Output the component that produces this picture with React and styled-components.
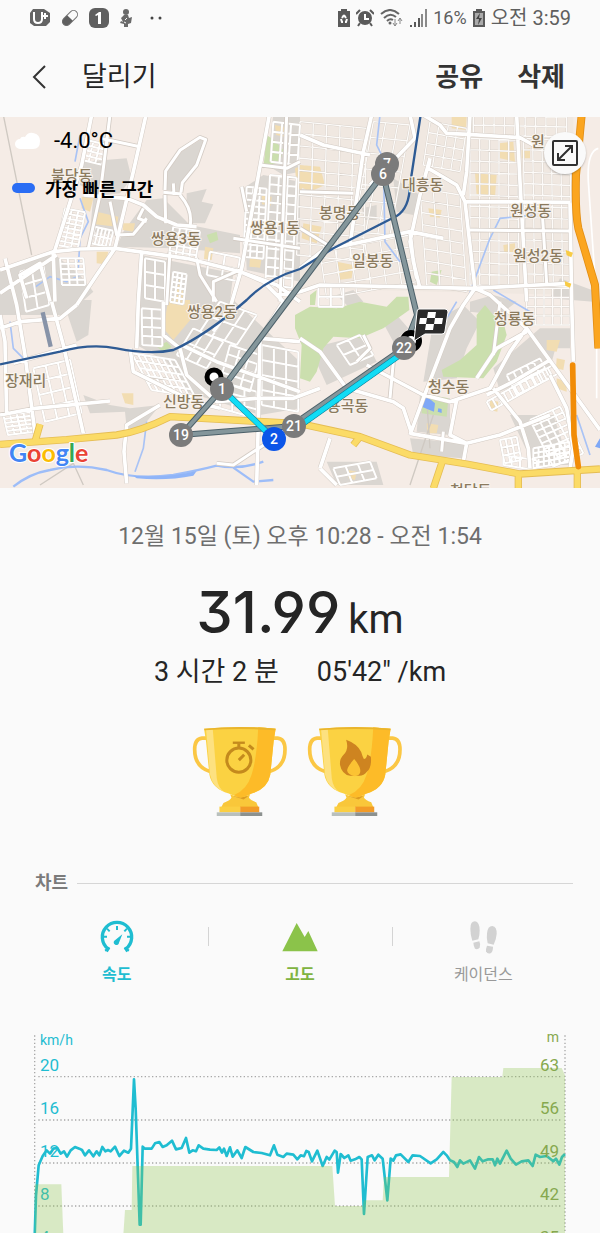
import React, { useState } from 'react'
import styled, { createGlobalStyle } from 'styled-components'


const GlobalStyle = createGlobalStyle`
  * { box-sizing: border-box; }
  body {
    margin: 0;
    background-color: #fafafa;
    color: #252525;
    font-family: Roboto, "Noto Sans CJK KR", sans-serif;
  }
  button {
    margin: 0;
    padding: 0;
    border: 0;
    background: none;
    color: inherit;
    font-family: inherit;
    cursor: pointer;
  }
`

const Page = styled.div`
  display: flex;
  flex-direction: column;
  overflow: hidden;
`

const StatusBar = styled.div`
  display: flex;
  align-items: center;
  justify-content: space-between;
  height: 36px;
  padding: 0 29px;
  color: #5f5f5f;
`

const StatusGroup = styled.div`
  display: flex;
  align-items: center;
  gap: ${(props) => props.$gap}px;
`

const StatusText = styled.span`
  font-size: ${(props) => props.$size}px;
  line-height: 24px;
  white-space: nowrap;
`

const Header = styled.header`
  display: flex;
  align-items: center;
  height: 81px;
  padding: 0 35px 0 28px;
`

const BackButton = styled.button`
  display: flex;
  width: 24px;
  height: 28px;
  margin-right: 30px;
`

const Title = styled.h1`
  flex: 1;
  margin: 0;
  font-size: 27px;
  font-weight: 400;
  line-height: 36px;
`

const Actions = styled.div`
  display: flex;
  gap: 34px;
`

const ActionButton = styled.button`
  color: #333;
  font-size: 26px;
  font-weight: 700;
  line-height: 36px;
`

const MapArea = styled.section`
  position: relative;
  overflow: hidden;
`

const Drawing = styled.svg`
  display: block;
  width: 100%;
  height: auto;
`

const MapLabel = styled.text`
  font-size: 15px;
  font-weight: 500;
  fill: #8b7b5f;
  stroke: #f9f4ee;
  stroke-width: 2px;
  paint-order: stroke;
`

const MarkerText = styled.text`
  font-size: 14px;
  font-weight: 500;
  fill: #fff;
  text-anchor: middle;
`

const GoogleText = styled.text`
  font-family: Lato, sans-serif;
  font-size: 25px;
  font-weight: 700;
  stroke: #fff;
  stroke-width: 2px;
  paint-order: stroke;
`

const Legend = styled.div`
  position: absolute;
  top: 0;
  left: 12px;
  display: grid;
  grid-template-columns: 33px auto;
  grid-template-rows: 47px 47px;
  align-items: center;
  color: #000;
`

const Temperature = styled.span`
  padding-left: 9px;
  font-size: 22px;
`

const FastestLabel = styled.span`
  font-size: 18px;
  font-weight: 700;
`

const FastestMark = styled.span`
  width: 23px;
  height: 10px;
  border-radius: 5px;
  background-color: #2a6df4;
`

const ExpandButton = styled.button`
  position: absolute;
  top: 15px;
  right: 14px;
  display: flex;
  align-items: center;
  justify-content: center;
  width: 42px;
  height: 42px;
  border-radius: 50%;
  background-color: #fafafa;
  box-shadow: 0 1px 2px rgba(0, 0, 0, 0.25);
`

const Summary = styled.section`
  display: flex;
  flex-direction: column;
  align-items: center;
  padding-top: 31px;
`

const DateLine = styled.p`
  margin: 0;
  color: #6e6e6e;
  font-size: 23px;
  line-height: 36px;
`

const Distance = styled.p`
  display: flex;
  align-items: baseline;
  gap: 8px;
  margin: 25px 0 0;
  line-height: 64px;
`

const DistanceValue = styled.span`
  font-family: Inter, Roboto, sans-serif;
  font-size: 58px;
  font-weight: 500;
  font-feature-settings: "ss01", "cv09";
`

const DistanceUnit = styled.span`
  font-size: 40px;
`

const Stats = styled.p`
  display: flex;
  gap: 38px;
  margin: 0;
  font-size: 27px;
  line-height: 40px;
`

const Trophies = styled.div`
  display: flex;
  gap: 20px;
  margin: 34px 6px 0 0;
`

const ChartTitle = styled.h2`
  display: flex;
  align-items: center;
  gap: 9px;
  margin: 53px 27px 0 35px;
  color: #7b7b7b;
  font-size: 18px;
  font-weight: 700;
  line-height: 26px;

  &::after {
    content: "";
    flex: 1;
    height: 1px;
    background-color: #d6d6d6;
  }
`

const Tabs = styled.div`
  display: grid;
  grid-template-columns: repeat(3, 1fr);
  padding: 24px 25px 0;
`

const Tab = styled.button`
  position: relative;
  display: flex;
  flex-direction: column;
  align-items: center;
  gap: 7px;
  color: ${(props) => props.$color};
  font-size: 16px;
  font-weight: ${(props) => (props.$on ? 700 : 400)};
  line-height: 24px;

  &:not(:first-child)::before {
    content: "";
    position: absolute;
    top: 7px;
    left: 0;
    width: 1px;
    height: 19px;
    background-color: #d4d4d4;
  }
`

const ChartBox = styled.section`
  margin-top: 35px;
`

const AxisText = styled.text`
  font-size: ${(props) => (props.$unit ? 14 : 17)}px;
  fill: ${(props) => props.$color};
  text-anchor: ${(props) => props.$anchor || 'start'};
`


const CYAN = '#1fbdd1'
const GREEN = '#86a84e'

// slanted block of small streets: corner, along vector, down vector, counts
const block = (x, y, ax, ay, bx, by, cols, rows) => {
  let d = ''
  for (let i = 0; i <= cols; i++) {
    const t = i / cols
    d += `M${x + ax * t} ${y + ay * t}l${bx} ${by}`
  }
  for (let i = 0; i <= rows; i++) {
    const t = i / rows
    d += `M${x + bx * t} ${y + by * t}l${ax} ${ay}`
  }
  return d
}

// map drawing units are a third of a pixel
const greyAreas = [
  'M500 225L500 170L545 110L605 72L612 82L585 150L545 200L538 230Z',
  'M250 140L380 130L395 190L360 235L300 240L240 210Z',
  'M280 245L380 255L350 360L270 350Z',
  'M440 255L490 250L570 330L720 360L720 415L520 400L350 395L370 350Z',
  'M560 235L620 222L605 260L640 268L615 325L575 325L560 270Z',
  'M730 220L790 180L900 200L900 500L740 465Z',
  'M820 0L900 0L900 170L850 180L800 150Z',
  'M0 460L160 415L240 480L280 530L200 600L0 600Z',
  'M425 420L700 475L690 560L420 560Z',
  'M0 555L275 555L265 660L230 680L190 560Z',
  'M415 555L700 555L900 740L900 880L780 900L560 830L500 740L410 690Z',
  'M250 840L330 870L390 880L480 870L420 945L380 940L375 890L270 895Z',
  'M1180 190L1260 240L1240 300L1190 290Z', 'M1085 280L1130 270L1130 315L1095 315Z',
  'M1390 570L1440 620L1400 700L1370 790L1270 800L1300 620Z',
  'M1410 560L1480 540L1550 560L1500 600L1410 590Z',
  'M1230 970L1395 985L1390 1030L1240 1020Z', 'M1260 840L1350 850L1350 960L1250 950Z',
  'M1480 760L1620 640L1680 650L1650 760L1500 830Z', 'M1530 900L1660 900L1710 1050L1600 1050Z',
  'M930 700L1090 660L1130 740L980 810Z', 'M980 1040L1130 1040L1150 1110L1010 1110Z',
  'M1620 640L1710 640L1710 700L1650 700Z', 'M1680 490L1790 530L1780 560L1650 550Z',
  'M1010 540L1060 525L1090 560L1050 580Z', 'M1150 625L1190 600L1225 640L1180 680Z',
]
const sandAreas = [
  'M245 245L280 250L270 290L245 280Z', 'M290 290L355 305L350 335L285 328Z', 'M370 325L405 325L400 350L368 345Z',
  'M290 410L325 410L315 448L290 445Z', 'M615 395L640 400L635 435L612 432Z', 'M750 425L785 430L780 458L748 455Z',
  'M825 30L862 38L855 65L828 60Z', 'M785 240L815 245L812 272L786 268Z', 'M540 490L555 560L515 560Z',
  'M505 555L570 555L575 610L520 675L490 640Z', 'M365 835L400 835L400 870L375 865Z', 'M885 160L910 150L905 230L890 210Z',
  'M900 150L960 155L975 210L930 230L900 215Z', 'M1425 175L1490 180L1485 245L1430 240Z',
  'M1498 85L1540 80L1545 140L1500 130Z', 'M1355 5L1400 5L1398 45L1355 40Z', 'M1285 280L1325 285L1320 308L1290 305Z',
  'M910 325L965 335L950 385L905 370Z', 'M1010 440L1060 450L1055 490L1015 495Z', 'M1510 390L1545 385L1545 415L1512 410Z',
  'M1640 675L1680 675L1670 710L1640 705Z', 'M1670 730L1695 735L1690 765L1668 760Z', 'M1470 855L1495 860L1492 890L1470 885Z',
  'M1280 925L1315 930L1310 955L1282 955Z', 'M1565 105L1590 100L1590 130L1565 130Z', 'M1045 1065L1070 1070L1065 1095L1045 1090Z',
  'M1670 790L1700 800L1700 830L1670 820Z',
]
const greenAreas = [
  'M800 60L822 75L850 105L840 140L790 160Z', 'M620 360L650 350L655 375L630 385Z', 'M470 695L500 680L515 695L490 710Z',
  'M885 600L930 575L1010 580L1080 560L1160 575L1190 545L1225 545L1228 585L1150 640L1080 670L1000 665L970 700L950 770L930 800L900 790L905 690L885 640Z',
  'M1430 600L1455 570L1480 600L1510 620L1520 660L1490 740L1450 790L1330 785L1325 765L1380 735L1430 690Z',
  'M1265 835L1345 850L1340 905L1265 895Z', 'M1295 470L1325 465L1310 510L1290 500Z', 'M930 540L950 525L945 570L930 570Z',
]
const mainRoads = [
  'M275 0L245 150L195 310L160 420L165 560', 'M438 0L400 170L345 400L290 480L230 570',
  'M0 465L160 410L240 402L345 400L560 430L720 470L830 510L900 560', 'M808 0L770 210L725 460L690 580L640 650',
  'M250 240L380 250L430 270L470 305L530 330L590 335', 'M15 430L50 570L75 720L105 955', 'M0 535L170 420',
  'M155 560L190 690L250 955', 'M0 900L105 880L330 858', 'M0 600L15 680L20 900', 'M80 550L60 480L120 445L135 500L150 560',
  'M230 570L180 610L60 620L0 640', 'M230 690L40 745',
  'M720 470L790 500L850 560L780 670L900 680', 'M780 670L775 920L770 1110', 'M545 690L650 740L900 830',
  'M540 700L490 660L490 560', 'M540 700L560 780L650 860L770 850', 'M410 700L415 560L425 410', 'M390 700L400 770L580 860L660 880',
  'M480 870L380 930L372 1010L380 1105', 'M1115 0L1090 110L1050 390', 'M1230 0L1245 70L1110 210',
  'M1270 0L1320 30L1340 55L1405 58L1560 68L1600 90', 'M1410 0L1400 170L1390 240', 'M1290 130L1285 160L1370 210L1395 260L1425 520',
  'M1290 130L1260 240L1230 380L1250 490',
  'M1425 520L1390 570L1350 640L1270 850L1230 960',
  'M1395 260L1710 262', 'M1550 0L1560 200L1580 560', 'M1710 262L1715 560L1720 740', 'M900 460L970 405L1230 350L1330 370',
  'M830 540L900 530L960 510L1420 520L1710 505', 'M1425 520L1470 540L1580 640L1800 945', 'M1230 350L1240 440L1260 520',
  'M1580 640L1530 710L1470 820L1350 860L1270 840L1100 750', 'M1370 855L1350 960L1400 985L1500 960L1650 900',
  'M1230 955L1400 985L1390 1040', 'M900 670L960 710L1040 820L1180 860L1210 880L1235 955', 'M770 850L880 850L960 820',
  'M1480 820L1560 920L1585 1000L1590 1060', 'M1650 735L1540 800L1460 840', 'M1580 650L1490 700L1430 790',
  'M1650 780L1700 880L1720 1000L1710 1060', 'M960 1060L990 970', 'M960 1060L1010 1110', 'M900 60L970 90L1110 120',
]
const smallRoads = [
  'M330 0L300 240L265 400', 'M300 70L420 95', 'M490 232L545 237', 'M520 205L522 240', 'M495 240L497 325', 'M540 240Q580 285 570 335',
  'M495 225L497 168L540 106L600 67L617 74L590 150L547 203L543 232', 'M510 410L500 570', 'M590 430L600 480L650 560', 'M430 280L415 310L440 320',
  'M330 260L350 360L400 358L440 310', 'M720 465L640 500L640 560', 'M700 370L900 400', 'M780 150L860 160L900 140', 'M725 215L740 290', 'M860 0L840 560',
  'M650 1045L700 1050L760 1010L800 985', 'M1090 660L1110 700L1070 740', 'M1180 740L1170 850', 'M1330 950L1325 1010',
  'M1410 345L1710 348', 'M900 230L1060 235', 'M1625 262L1640 505', 'M900 340L1000 400', 'M1500 560L1480 720',
]
const lanes = [
  block(260, 75, 60, 14, -14, 60, 3, 4), block(195, 280, 60, 12, -22, 110, 3, 8), block(285, 335, 55, 12, -12, 50, 5, 2),
  block(520, 335, 80, 14, -14, 90, 4, 5), block(740, 215, 60, 6, -10, 210, 3, 11), block(810, 180, 80, 8, -14, 330, 3, 12),
  block(180, 430, 70, 0, 6, 80, 3, 5), block(60, 470, 70, -20, 18, 120, 2, 3), block(520, 470, 40, 8, -10, 90, 3, 6),
  block(630, 410, 90, 18, -10, 70, 2, 2), block(435, 430, 60, 10, 0, 120, 2, 3), block(820, 20, 80, 10, -8, 120, 3, 4),
  block(100, 760, 110, -26, 35, 160, 3, 4), block(10, 900, 80, -10, 14, 60, 4, 5), block(395, 715, 130, 20, 60, 110, 7, 5),
  block(425, 580, 60, 4, 2, 110, 2, 4), block(580, 640, 90, 40, -50, 80, 3, 2), block(660, 560, 110, 40, -60, 90, 3, 2),
  block(690, 690, 90, 30, -30, 110, 3, 4), block(785, 690, 110, 20, 0, 180, 3, 4), block(660, 800, 110, 30, 0, 80, 3, 3),
]
const fineStreets = [
  block(900, 20, 200, 20, -10, 400, 5, 11), block(1120, 20, 110, 10, -60, 330, 3, 7), block(1410, 70, 145, 6, 0, 440, 5, 13),
  block(1570, 70, 140, 6, 6, 440, 5, 13), block(1260, 220, 120, 20, 20, 290, 3, 8), block(1290, 20, 110, 20, -20, 130, 4, 4),
  block(960, 410, 270, -50, 20, 140, 6, 4), block(1580, 520, 130, 0, 0, 110, 5, 4), block(1420, 0, 280, 6, 0, 60, 9, 2),
]
const denseLanes = [
  block(1460, 860, 200, -110, 14, 26, 12, 1), block(1590, 915, 90, -40, 70, 140, 4, 8), block(1500, 975, 50, -10, 14, 70, 3, 3),
  block(1600, 1000, 110, -20, 0, 60, 7, 4), block(1520, 780, 100, -50, 30, 60, 5, 2), block(1510, 1020, 100, 16, 0, 30, 4, 1),
  block(1010, 690, 70, -30, 40, 60, 2, 2), block(1000, 1060, 110, -20, 20, 50, 3, 2), block(955, 515, 75, 0, 0, 60, 2, 2),
]
const streams = [
  'M240 60L225 140', 'M240 250L265 320L240 370L235 460', 'M100 520L150 485L200 500L240 480', 'M30 620L40 700L80 740L100 920',
  'M1140 0L1130 90L1150 130L1155 380L1200 440', 'M1600 300L1500 310L1470 370L1440 450L1400 560', 'M440 920L430 1000L405 1070',
  'M1340 610L1370 560', 'M1480 525L1590 590', 'M1730 900L1770 1020',
]
const yellowRoads =
  'M0 988L200 974L350 960Q420 950 510 905L900 926L1080 965L1230 1020L1400 1047L1560 1077L1800 1062M105 980L120 928M1300 1120L1330 1030M1555 1075L1555 1120M1732 1060V1120M1080 965L1060 990'
const highway = 'M1745 0L1728 180Q1725 290 1735 340L1785 510L1795 700'

const places = [
  ['불당동', 51, 64], ['쌍용3동', 151, 127], ['쌍용1동', 250, 116], ['쌍용2동', 187, 200], ['봉명동', 319, 101],
  ['일봉동', 352, 149], ['대흥동', 402, 73], ['원성동', 510, 99], ['원', 531, 30], ['원성2동', 513, 144],
  ['청룡동', 494, 207], ['청수동', 428, 275], ['용곡동', 327, 294], ['장재리', 5, 269], ['신방동', 163, 290], ['청당동', 450, 379],
]

const markers = [
  { label: '7', x: 387, y: 47 },
  { label: '6', x: 383, y: 57 },
  { label: '1', x: 222, y: 272 },
  { label: '19', x: 181, y: 318 },
  { label: '21', x: 294, y: 309 },
  { label: '22', x: 404, y: 231 },
  { label: '2', x: 274, y: 322, fastest: true },
]

function RouteMap() {
  return (
    <Drawing viewBox="0 0 600 371" role="img" aria-label="달리기 경로 지도">
      <rect width="600" height="371" fill="#f5ece6" />
      <g transform="translate(0 -2) scale(0.33333)" fill="none" strokeLinejoin="round">
        <path d="M900 0H1720V540L900 520Z" fill="#f0e8e1" />
        <path d={greyAreas.join('')} fill="#dad6d1" />
        <path d={sandAreas.join('')} fill="#f2ddb2" />
        <path d={greenAreas.join('')} fill="#cbdfae" />
        <path d="M10 0L95 420M220 1045L250 1110M220 1045L120 1110M1280 850L1290 1000M1230 1110L1300 900" stroke="#cfc9c2" strokeWidth="4" />
        <path d={fineStreets.join('')} stroke="#d5cec7" strokeWidth="6" />
        <path d={fineStreets.join('')} stroke="#fdfbf9" strokeWidth="4" />
        <path d={streams.join('')} stroke="#a9c3f5" strokeWidth="5" />
        <path d="M40 1115Q90 1075 150 1065Q230 1045 320 1065Q400 1095 520 1080Q600 1065 650 1052Q720 1065 790 1040M700 1058L760 1100L820 1095" stroke="#9dbdf8" strokeWidth="7" />
        <path d="M400 1082Q500 1090 590 1068L580 1082Q500 1098 410 1090Z" fill="#8fb4f8" />
        <path d="M1275 840L1305 865L1302 890L1265 875Z M1800 970L1785 995L1800 1000Z M1315 880l10 2v12l-12-4z" fill="#7fa8f6" />
        <path d={lanes.join('') + denseLanes.join('')} stroke="#d6cfc8" strokeWidth="8" />
        <path d={lanes.join('') + denseLanes.join('')} stroke="#fff" strokeWidth="6" />
        <path d={mainRoads.join('') + smallRoads.join('')} stroke="#d3cbc4" strokeWidth="14" />
        <path d={smallRoads.join('')} stroke="#fff" strokeWidth="9" />
        <path d={mainRoads.join('')} stroke="#fff" strokeWidth="11" />
        <path d="M128 592L152 695" stroke="#8793a8" strokeWidth="13" />

        <path d={yellowRoads} stroke="#e5bd54" strokeWidth="22" />
        <path d={yellowRoads} stroke="#fbdb67" strokeWidth="17" />
        <path d="M1795 100Q1760 110 1765 200L1790 560L1790 850" stroke="#fff" strokeWidth="5" />
        <path d={highway} stroke="#e28e15" strokeWidth="24" />
        <path d={highway} stroke="#fba51f" strokeWidth="19" />
        <path d="M1718 750L1722 960L1735 1055" stroke="#f18c07" strokeWidth="17" strokeLinecap="round" />
        <path d="M1697 405l22 8-5 14-14-6zM1694 498l20 8-4 12-14-6z" fill="#f8cb45" />

        <path d="M0 748L180 710Q270 685 350 700Q450 720 520 705Q620 660 740 555Q800 492 900 462L1000 400L1190 303Q1228 280 1230 210L1262 0" stroke="#2e5b94" strokeWidth="7" />
      </g>

      {places.map(([name, x, y]) => (
        <MapLabel key={name} x={x} y={y}>{name}</MapLabel>
      ))}

      <g fill="none" strokeLinejoin="round">
        <path d="M181 318L222 272L383 57L417 198L404 231L294 307M181 318L294 309" stroke="#4c6069" strokeWidth="6" />
        <path d="M181 318L222 272L383 57L417 198L404 231L294 307M181 318L294 309" stroke="#84969b" strokeWidth="4" />
        <path d="M222 272L274 322M404 235L298 310" stroke="#087f99" strokeWidth="6" />
        <path d="M222 272L274 322M404 235L298 310" stroke="#12dcf5" strokeWidth="5" />
        <circle cx="411" cy="224" r="8" fill="#fff" stroke="#000" strokeWidth="6" />
        <circle cx="214" cy="260" r="7" fill="#fff" stroke="#000" strokeWidth="5" />
      </g>

      {markers.map((marker) => (
        <g key={marker.label}>
          <circle cx={marker.x} cy={marker.y} r="12" fill={marker.fastest ? '#0b55e8' : '#7b7b7b'} />
          <MarkerText x={marker.x} y={marker.y + 5}>{marker.label}</MarkerText>
        </g>
      ))}

      <g transform="translate(412 191)">
        <path d="M7 1H33Q36 1 36 4L33 23Q33 26 30 26H13L2 33L5 4Q5 1 7 1Z" fill="#2b2b2b" stroke="#fff" strokeWidth="1" />
        <path d="M16 4h8l-1 6h-8zM8 10h7l-1 6h-7zM23 10h8l-1 6h-8zM14 16h8l-1 6h-8z" fill="#fff" />
      </g>

      <GoogleText x="9" y="345">
        <tspan fill="#4285f4">G</tspan><tspan fill="#ea4335">o</tspan><tspan fill="#fbbc05">o</tspan><tspan fill="#4285f4">g</tspan><tspan fill="#34a853">l</tspan><tspan fill="#ea4335">e</tspan>
      </GoogleText>
    </Drawing>
  )
}

function StatusIcons() {
  return (
    <StatusGroup $gap={10}>
      <svg width="22" height="18" viewBox="0 0 22 18">
        <path d="M4 0H15L21 4V13L17 17H5L1 14V4Z" fill="#646464" />
        <path d="M5 3V10Q5 14 9 14T13 10V3M16 4v6M13 7h6" fill="none" stroke="#fff" strokeWidth="2" />
      </svg>
      <svg width="18" height="18" viewBox="0 0 18 18">
        <g transform="rotate(45 9 9)">
          <rect x="5" y="0" width="8" height="18" rx="4" fill="#fafafa" stroke="#757575" strokeWidth="1" />
          <path d="M5 9h8v5a4 4 0 0 1-8 0z" fill="#5f5f5f" />
        </g>
      </svg>
      <svg width="20" height="20" viewBox="0 0 20 20">
        <rect width="20" height="20" rx="6" fill="#5f5f5f" />
        <path d="M6 7L10 4H12V16H9V7L7 8Z" fill="#fff" />
      </svg>
      <svg width="14" height="18" viewBox="0 0 14 18">
        <circle cx="7" cy="3" r="3" fill="#6a6a6a" />
        <path d="M5 6h4l1 3 3-1-1 6-3 1v3H5v-3l-4-1 1-2 2 1-2-4z" fill="#6a6a6a" />
        <path d="M6 11l2-2M5 13l2 1" stroke="#fafafa" />
      </svg>
      <svg width="24" height="18" viewBox="0 0 24 18">
        <circle cx="9" cy="9" r="1.5" fill="#444" />
        <circle cx="17" cy="9" r="1.5" fill="#444" />
      </svg>
    </StatusGroup>
  )
}

function BatteryIcon({ charging }) {
  return (
    <svg width="12" height="18" viewBox="0 0 12 18">
      <path d="M3 0h6v2h3v16H0V2h3z" fill="#5a5a5a" />
      {charging ? (
        <>
          <path d="M2 4h8v12H2z" fill="#aaa" />
          <path d="M7 4L3 10h3l-1 6 4-7H6z" fill="#444" />
        </>
      ) : (
        <path d="M6 6L4 9M6 6L8 9M3 10L4 13H5M9 10L8 13H7" fill="none" stroke="#fff" strokeWidth="2" />
      )}
    </svg>
  )
}

function PhoneStatus() {
  return (
    <StatusGroup $gap={6}>
      <BatteryIcon />
      <svg width="18" height="18" viewBox="1 0 18 18">
        <circle cx="10" cy="9" r="7" fill="#5a5a5a" />
        <path d="M1 5L5 1M19 5L15 1M5 14l-2 3M15 14l2 3" stroke="#5a5a5a" strokeWidth="2" />
        <path d="M10 5v5h4" fill="none" stroke="#fff" strokeWidth="2" />
      </svg>
      <svg width="23" height="18" viewBox="0 0 23 18">
        <path d="M1 5Q10-3 19 5M4 9Q10 3 16 8M7 12Q10 9 13 11" fill="none" stroke="#666" strokeWidth="2" />
        <circle cx="10" cy="14" r="1.5" fill="#666" />
        <path d="M15 10v7M13 14l2 3 2-3M20 15V9M18 12l2-3 2 3" fill="none" stroke="#888" />
      </svg>
      <svg width="18" height="18" viewBox="0 0 18 18">
        <path d="M2 18v-2M6 18v-5M10 18V9" stroke="#5a5a5a" strokeWidth="2" />
        <path d="M13 18V5M17 18V0" stroke="#8a8a8a" strokeWidth="2" />
      </svg>
      <StatusText $size={18}>16%</StatusText>
      <BatteryIcon charging />
      <StatusText $size={20}>오전 3:59</StatusText>
    </StatusGroup>
  )
}

function Trophy({ kind }) {
  return (
    <svg width="95" height="91" viewBox="36 34 284 272" role="img" aria-label={kind === 'time' ? '시간 기록' : '칼로리 기록'}>
      <path d="M80 70H66Q44 72 44 104Q44 156 90 170M278 70H292Q314 72 314 104Q314 156 268 170" fill="none" stroke="#fbc744" strokeWidth="11" />
      <path d="M150 238L180 250L210 238L206 248Q210 256 228 262L234 276H124L130 264Q152 256 154 248Z" fill="#f9c73a" />
      <path d="M160 244L190 254L204 244Z" fill="#dd9c22" />
      <path d="M72 42Q180 32 286 42L280 80L270 180Q262 222 214 236Q190 248 180 248Q168 246 146 236Q96 222 88 180L78 80Z" fill="#fbd242" />
      <path d="M234 38L286 42L280 80L270 180Q262 222 214 236Q190 248 180 248Q170 246 162 240Q200 226 214 180Q230 130 234 38Z" fill="#fdbb28" />
      <path d="M78 44L98 42L110 190Q114 220 134 232Q98 218 90 180Z" fill="#fde180" />
      <path d="M72 42Q180 32 286 42L284 47Q180 39 74 47Z" fill="#e9b42d" />
      <path d="M118 275H180V292H118Z" fill="#fbcf43" />
      <path d="M180 275H237V292H180Z" fill="#f29b27" />
      <path d="M110 292H180V303H110Z" fill="#b9c0bd" />
      <path d="M180 292H246V303H180Z" fill="#8c918f" />
      {kind === 'time' ? (
        <g fill="none" stroke="#c48a1d">
          <circle cx="176" cy="136" r="36" strokeWidth="9" />
          <path d="M176 100V86M206 92L220 104M176 136L192 120" strokeWidth="9" />
          <path d="M158 84H194" strokeWidth="7" />
        </g>
      ) : (
        <>
          <path d="M153 75Q188 88 198 112Q202 126 206 133Q214 132 216 119L227 126Q230 158 215 171Q206 183 193 183Q178 183 165 183Q140 178 135 151Q132 133 146 119Q162 103 153 75Z" fill="#ce8420" />
          <path d="M177 133Q198 157 195 172Q193 182 178 184Q158 180 156 168Q155 158 177 133Z" fill="#fbc333" />
        </>
      )}
    </svg>
  )
}

// speed samples, three units per pixel
const speed = [
  104, 645, 108, 520, 116, 430, 128, 402, 140, 385, 150, 395, 160, 380, 172, 378, 182, 395, 192, 388, 201, 404, 212, 385,
  225, 375, 238, 380, 246, 384, 255, 400, 267, 385, 280, 403, 290, 388, 298, 400, 307, 375, 316, 388, 324, 384, 332, 388,
  345, 374, 358, 402, 372, 386, 385, 392, 393, 380, 402, 172, 407, 260, 419, 608, 422, 608, 428, 374, 435, 380, 455, 380, 465, 364,
  478, 360, 488, 375, 500, 370, 516, 356, 528, 382, 545, 378, 558, 348, 568, 392, 578, 385, 588, 388, 596, 370, 610, 380,
  630, 383, 650, 384, 658, 376, 666, 392, 672, 380, 680, 402, 690, 376, 698, 404, 712, 385, 725, 408, 736, 375, 760, 390,
  785, 393, 810, 400, 822, 370, 832, 398, 850, 405, 860, 395, 880, 398, 892, 412, 902, 400, 912, 403, 919, 387, 926, 390,
  936, 418, 952, 386, 968, 432, 980, 405, 988, 413, 1004, 386, 1010, 390, 1014, 452, 1022, 396, 1033, 408, 1045, 400, 1052, 416,
  1065, 412, 1078, 405, 1085, 412, 1092, 576, 1103, 405, 1116, 400, 1124, 415, 1135, 398, 1148, 410, 1162, 535, 1172, 410,
  1180, 416, 1188, 400, 1202, 397, 1225, 420, 1238, 400, 1260, 402, 1292, 424, 1310, 412, 1330, 390, 1340, 400, 1350, 415,
  1362, 420, 1372, 435, 1380, 415, 1390, 425, 1410, 415, 1425, 440, 1437, 405, 1448, 418, 1465, 412, 1478, 412, 1485, 430,
  1492, 410, 1500, 425, 1520, 386, 1532, 410, 1548, 428, 1565, 418, 1585, 415, 1598, 432, 1607, 398, 1620, 405, 1640, 402,
  1660, 418, 1668, 410, 1678, 428, 1686, 405, 1695, 396,
]

const axisRows = [
  { y: 49, speed: '20', altitude: '63' },
  { y: 92, speed: '16', altitude: '56' },
  { y: 135, speed: '12', altitude: '49' },
  { y: 178, speed: '8', altitude: '42' },
  { y: 221, speed: '4', altitude: '35' },
]

function Chart({ shown }) {
  return (
    <Drawing viewBox="0 0 600 213" role="img" aria-label="속도와 고도 차트">
      <AxisText x="40" y="23" $unit $color={CYAN}>km/h</AxisText>
      {axisRows.map((row) => (
        <AxisText key={row.speed} x="40" y={row.y} $color={CYAN}>{row.speed}</AxisText>
      ))}
      <g transform="scale(0.33333)" fill="none">
        <g stroke="#a8a8a8" strokeWidth="4" strokeDasharray="4 7">
          <path d="M104 40V639M1695 40V639" />
          <path d="M115 164H1685M115 294H1685M115 423H1685M115 552H1685" />
        </g>
        {shown.speed && (
          <polyline points={speed.join(' ')} stroke={CYAN} strokeWidth="8" strokeLinejoin="round" />
        )}
        {shown.altitude && (
          <path
            d="M104 639V487H184L190 639ZM370 639L375 564H395L397 432H997L1005 552H1088L1092 535H1148L1152 465H1347L1355 165H1507L1510 138H1685L1695 160V639Z"
            fill="#8bc34a"
            fillOpacity="0.3"
          />
        )}
      </g>
      <AxisText x="559" y="20" $unit $anchor="end" $color={GREEN}>m</AxisText>
      {axisRows.map((row) => (
        <AxisText key={row.altitude} x="559" y={row.y} $anchor="end" $color={GREEN}>{row.altitude}</AxisText>
      ))}
    </Drawing>
  )
}

const SpeedIcon = () => (
  <svg width="36" height="36" viewBox="0 0 108 108">
    <path d="M22 94L27 86A44 44 0 1 1 81 86L86 94" fill="none" stroke={CYAN} strokeWidth="10" />
    <path d="M54 18v12M14 50h10M84 50h10M24 26l8 8M84 26l-8 8M18 92l14-8M90 92l-14-8" stroke={CYAN} strokeWidth="6" />
    <path d="M70 43L60 68A8 8 0 1 1 46 62Z" fill={CYAN} />
  </svg>
)

const AltitudeIcon = () => (
  <svg width="36" height="36" viewBox="0 0 108 108">
    <path d="M1 94L44 9L68 51L79 33L107 94Z" fill="#8bc34a" />
  </svg>
)

const CadenceIcon = () => (
  <svg width="36" height="36" viewBox="0 0 108 108" fill="#d2d2d2">
    <path d="M16 26Q16 4 30 4Q44 6 44 32Q44 46 40 58L22 62Q16 44 16 26Z" />
    <path d="M25 68L43 64Q48 74 44 83Q38 90 30 86Q26 80 25 68Z" />
    <path d="M66 40Q68 18 82 18Q96 20 95 42Q94 58 86 74L68 70Q64 56 66 40Z" />
    <path d="M66 77L84 80Q84 94 78 99Q68 104 63 94Q62 86 66 77Z" />
  </svg>
)

function App() {
  const [shown, setShown] = useState({ speed: true, altitude: true })

  const toggle = (name) => setShown({ ...shown, [name]: !shown[name] })

  return (
    <Page>
      <GlobalStyle />
      <StatusBar>
        <StatusIcons />
        <PhoneStatus />
      </StatusBar>

      <Header>
        <BackButton aria-label="뒤로">
          <svg width="24" height="28" viewBox="0 0 24 28">
            <path d="M17 3L6 14L17 25" fill="none" stroke="#333" strokeWidth="2" />
          </svg>
        </BackButton>
        <Title>달리기</Title>
        <Actions>
          <ActionButton>공유</ActionButton>
          <ActionButton>삭제</ActionButton>
        </Actions>
      </Header>

      <MapArea>
        <RouteMap />
        <Legend>
          <svg width="30" height="18" viewBox="0 0 30 18">
            <path d="M8 17A5 5 0 0 1 8 7Q9 4 13 5A8 8 0 0 1 28 9Q28 17 21 17Z" fill="#fff" />
          </svg>
          <Temperature>-4.0°C</Temperature>
          <FastestMark />
          <FastestLabel>가장 빠른 구간</FastestLabel>
        </Legend>
        <ExpandButton aria-label="지도 확대">
          <svg width="26" height="26" viewBox="0 0 26 26" fill="none" stroke="#303030" strokeWidth="2">
            <rect x="1" y="1" width="24" height="24" rx="1" />
            <path d="M7 19L19 7M13 6H20V13M6 13V20H13" />
          </svg>
        </ExpandButton>
      </MapArea>

      <Summary>
        <DateLine>12월 15일 (토) 오후 10:28 - 오전 1:54</DateLine>
        <Distance>
          <DistanceValue>31.99</DistanceValue>
          <DistanceUnit>km</DistanceUnit>
        </Distance>
        <Stats>
          <span>3 시간 2 분</span>
          <span>05'42" /km</span>
        </Stats>
        <Trophies>
          <Trophy kind="time" />
          <Trophy kind="calorie" />
        </Trophies>
      </Summary>

      <ChartTitle>차트</ChartTitle>
      <Tabs>
        <Tab $color={CYAN} $on aria-pressed={shown.speed} onClick={() => toggle('speed')}>
          <SpeedIcon />
          속도
        </Tab>
        <Tab $color="#80b340" $on aria-pressed={shown.altitude} onClick={() => toggle('altitude')}>
          <AltitudeIcon />
          고도
        </Tab>
        <Tab $color="#999" aria-pressed={false}>
          <CadenceIcon />
          케이던스
        </Tab>
      </Tabs>
      <ChartBox>
        <Chart shown={shown} />
      </ChartBox>
    </Page>
  )
}

export default App
